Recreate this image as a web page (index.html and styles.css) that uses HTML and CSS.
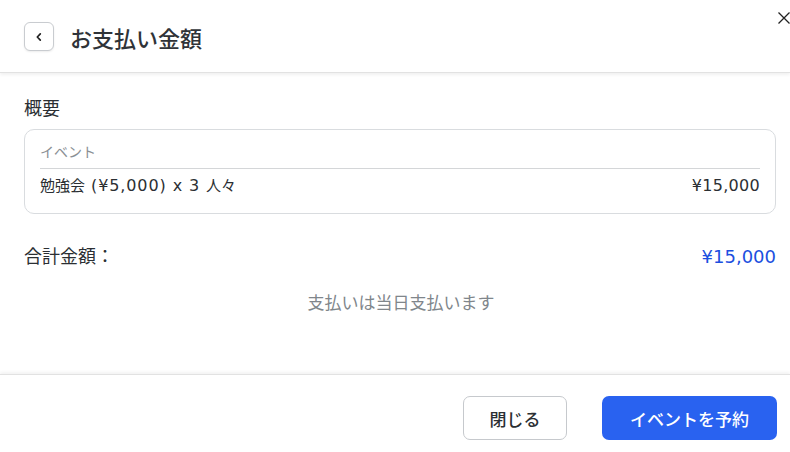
FILE: index.html
```html
<!DOCTYPE html>
<html lang="ja">
<head>
<meta charset="utf-8">
<link rel="stylesheet" href="styles.css">
</head>
<body>
<div class="modal">
  <header class="head">
    <button class="back" aria-label="戻る">
      <svg width="10" height="10" viewBox="0 0 10 10"><path d="M6.3 1.8 L3.3 5 L6.3 8.2" fill="none" stroke="#222" stroke-width="1.7" stroke-linecap="round" stroke-linejoin="round"/></svg>
    </button>
    <h1 class="title">お支払い金額</h1>
    <button class="close" aria-label="閉じる">
      <svg width="12" height="12" viewBox="0 0 12 12"><path d="M0.5 0.5 L11.5 11.5 M11.5 0.5 L0.5 11.5" stroke="#222" stroke-width="1.3"/></svg>
    </button>
  </header>
  <main class="body">
    <h2 class="section">概要</h2>
    <div class="card">
      <div class="label">イベント</div>
      <div class="row"><span>勉強会<span class="lat wide"> (¥5,000) x 3 </span>人々</span><span class="lat">¥15,000</span></div>
    </div>
    <div class="total"><span>合計金額：</span><span class="amount">¥15,000</span></div>
    <p class="note">支払いは当日支払います</p>
  </main>
  <footer class="foot">
    <button class="btn ghost">閉じる</button>
    <button class="btn primary">イベントを予約</button>
  </footer>
</div>
</body>
</html>
```
FILE: styles.css
```css
* { box-sizing: border-box; }
html, body { margin: 0; padding: 0; background: #fff; }
body {
  font-family: "DejaVu Sans", "Noto Sans CJK JP", sans-serif;
  color: #2b2f33;
  width: 790px;
  height: 452px;
  overflow: hidden;
}
.modal { display: flex; flex-direction: column; height: 452px; }
.head {
  position: relative;
  height: 73px;
  flex: none;
  display: flex;
  align-items: center;
  padding: 0 24px;
  gap: 16px;
  border-bottom: 1px solid #e2e2e2;
  box-shadow: 0 2px 3px rgba(0,0,0,0.06);
}
.back {
  width: 30px; height: 29px;
  border: 1px solid #c9ccd0;
  border-radius: 6px;
  background: #fff;
  display: flex; align-items: center; justify-content: center;
  padding: 0;
  margin-top: 1px;
  box-shadow: 0 1px 2px rgba(0,0,0,0.08);
}
.title {
  margin: 0;
  font-family: "Noto Sans CJK JP", sans-serif;
  font-size: 22px;
  font-weight: 500;
  color: #2f3338;
  line-height: 30px;
  margin-top: 1px;
}
.close {
  position: absolute;
  right: 0; top: 12px;
  border: 0; background: none; padding: 0;
  width: 12px; height: 12px;
  display: flex;
}
.body { flex: 1; padding: 21px 14px 0 24px; }
.section {
  margin: 0 0 9px;
  font-family: "Noto Sans CJK JP", sans-serif;
  font-size: 18px;
  font-weight: 400;
  line-height: 26px;
  color: #2b2f33;
}
.card {
  border: 1px solid #d9dcdf;
  border-radius: 10px;
  padding: 10px 15px 0 15px;
  height: 85px;
}
.label {
  font-size: 14px;
  color: #8a8f94;
  font-family: "Noto Sans CJK JP", sans-serif;
  padding-bottom: 6px;
  border-bottom: 1px solid #d4d6d8;
  line-height: 22px;
}
.row {
  display: flex;
  justify-content: space-between;
  align-items: baseline;
  font-size: 15px;
  line-height: 20px;
  padding-top: 7px;
  color: #2b2f33;
}
.lat { font-size: 16px; letter-spacing: 0.3px; }
.wide { letter-spacing: 0.9px; }
.total {
  display: flex;
  justify-content: space-between;
  margin-top: 30px;
  font-size: 18px;
  line-height: 26px;
}
.amount { color: #1c4fe0; }
.note {
  text-align: center;
  color: #80868b;
  font-size: 17px;
  margin: 21px 0 0;
  line-height: 24px;
  padding-left: 2px;
}
.foot {
  height: 78px;
  flex: none;
  border-top: 1px solid #e2e2e2;
  box-shadow: 0 -2px 3px rgba(0,0,0,0.05);
  display: flex;
  justify-content: flex-end;
  align-items: flex-start;
  gap: 35px;
  padding: 21px 13px 0 0;
}
.btn {
  height: 44px;
  border-radius: 7px;
  font-family: "Noto Sans CJK JP", sans-serif;
  font-size: 17px;
  font-weight: 500;
  padding: 0;
}
.ghost {
  width: 104px;
  background: #fff;
  border: 1px solid #c6c9cd;
  color: #2b2f33;
}
.primary {
  width: 175px;
  background: #2962f0;
  border: 0;
  color: #fff;
}
```
